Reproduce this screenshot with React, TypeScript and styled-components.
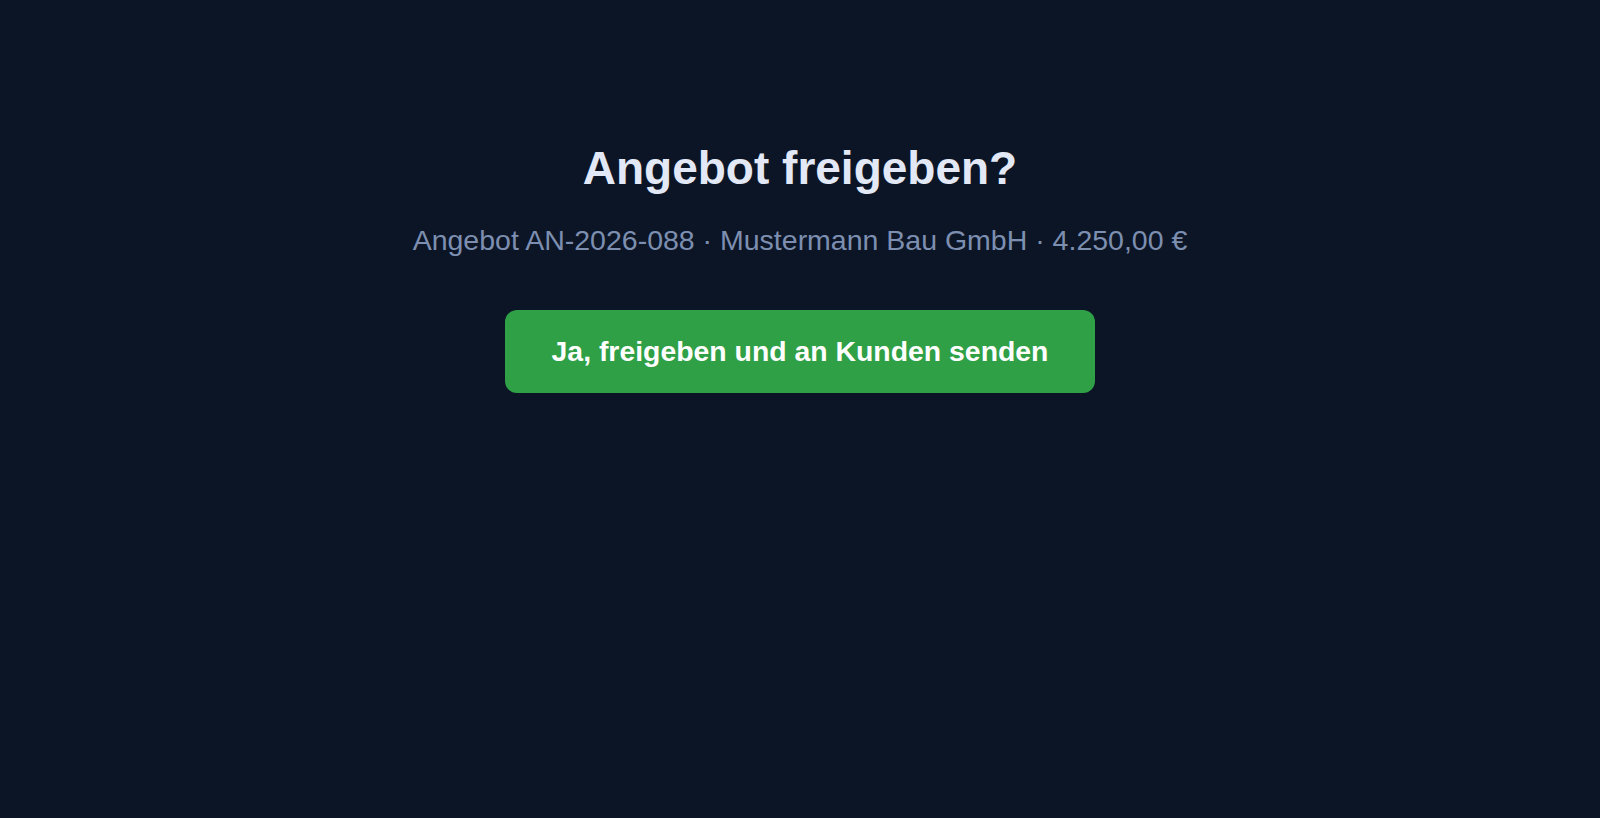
import React from "react";
import styled, { createGlobalStyle } from "styled-components";

const Global = createGlobalStyle`
  html, body { margin: 0; padding: 0; background: #0c1526; }
  body { font-family: "Liberation Sans", Arial, Helvetica, sans-serif; }
`;

const Page = styled.main`
  min-height: 818px;
  display: flex;
  flex-direction: column;
  align-items: center;
  padding-top: 138px;
  box-sizing: border-box;
  background: #0c1526;
`;

const Title = styled.h1`
  margin: 0;
  font-size: 46px;
  line-height: 60px;
  font-weight: 700;
  color: #e2e8f5;
`;

const Subtitle = styled.p`
  margin: 24px 0 0;
  font-size: 28.5px;
  line-height: 36px;
  color: #7d8fb0;
`;

const ConfirmButton = styled.button`
  margin-top: 52px;
  width: 590px;
  height: 83px;
  border: none;
  border-radius: 12px;
  background: #2fa046;
  color: #ffffff;
  font-family: inherit;
  font-size: 28.4px;
  font-weight: 700;
  cursor: pointer;
`;

export default function App() {
  return (
    <>
      <Global />
      <Page>
        <Title>Angebot freigeben?</Title>
        <Subtitle>Angebot AN-2026-088 · Mustermann Bau GmbH · 4.250,00 €</Subtitle>
        <ConfirmButton>Ja, freigeben und an Kunden senden</ConfirmButton>
      </Page>
    </>
  );
}
